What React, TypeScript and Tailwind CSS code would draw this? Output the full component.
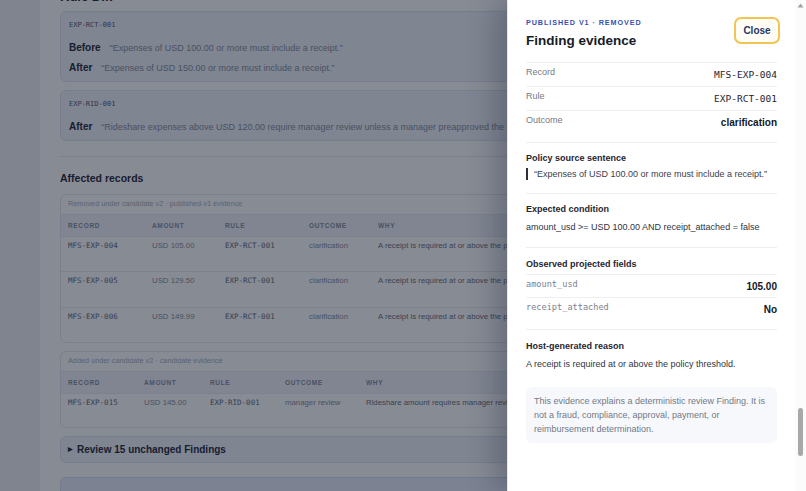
import React from "react";

const mono = "font-['DejaVu_Sans_Mono',monospace]";

function RuleCard({ id, rows }: { id: string; rows: { k: string; v: string }[] }) {
  return (
    <div className="rounded-[6px] border border-[#dde3ec] bg-[#eef2f8] px-[8px] pt-[8px] pb-[3px]">
      <div className={`${mono} text-[7px] leading-[10px] text-[#4b5873]`}>{id}</div>
      <div className="mt-[8px]">
        {rows.map((r) => (
          <div key={r.k} className="flex h-[20px] items-center gap-[9px] leading-[12px]">
            <span className="text-[10px] font-bold text-[#1e2433]">{r.k}</span>
            <span className="whitespace-nowrap text-[9px] text-[#858c99]">{r.v}</span>
          </div>
        ))}
      </div>
    </div>
  );
}

type Row = string[];

function DataTable({
  caption,
  cols,
  rows,
  lastH,
}: {
  caption: string;
  cols: string;
  rows: Row[];
  lastH?: string;
}) {
  const heads = ["RECORD", "AMOUNT", "RULE", "OUTCOME", "WHY"];
  return (
    <div className="overflow-hidden rounded-[6px] border border-[#e2e7ee] bg-white">
      <div className="flex h-[19px] items-center px-[7px] text-[7.3px] text-[#a9adb8]">{caption}</div>
      <div className={`grid h-[22px] items-center border-t border-[#e4e8ef] bg-[#f0f3f8] px-[7px] ${cols}`}>
        {heads.map((h) => (
          <div key={h} className="text-[6.5px] font-bold tracking-[0.1em] text-[#868c9b]">
            {h}
          </div>
        ))}
      </div>
      {rows.map((r, i) => (
        <div
          key={i}
          className={`grid ${i === rows.length - 1 && lastH ? lastH : "h-[35.3px]"} items-start border-t border-[#e8ebf0] px-[7px] pt-[4px] text-[7.8px] leading-[10px] ${cols}`}
        >
          <div className={`${mono} text-[7.5px] text-[#5e6474]`}>{r[0]}</div>
          <div className="text-[#868a94]">{r[1]}</div>
          <div className={`${mono} text-[7.5px] text-[#5e6474]`}>{r[2]}</div>
          <div className="text-[#868a94]">{r[3]}</div>
          <div className="whitespace-nowrap text-[#666b78]">{r[4]}</div>
        </div>
      ))}
    </div>
  );
}

function Background() {
  return (
    <div className="ml-[40px] min-h-[540px] w-[715px] bg-white px-[20px]">
      <div className="-mt-[12px] text-[13px] font-bold leading-[18px] text-[#1f2433]">Rule Diff</div>
      <div className="mt-[5px] flex flex-col gap-[8px]">
        <RuleCard
          id="EXP-RCT-001"
          rows={[
            { k: "Before", v: "\u201cExpenses of USD 100.00 or more must include a receipt.\u201d" },
            { k: "After", v: "\u201cExpenses of USD 150.00 or more must include a receipt.\u201d" },
          ]}
        />
        <RuleCard
          id="EXP-RID-001"
          rows={[
            {
              k: "After",
              v: "\u201cRideshare expenses above USD 120.00 require manager review unless a manager preapproved the expense.\u201d",
            },
          ]}
        />
      </div>
      <div className="mt-[15px] border-t border-[#e6e9ee] pt-[14px]">
        <div className="text-[10.5px] font-bold leading-[14px] text-[#1f2433]">Affected records</div>
        <div className="mt-[9px] flex flex-col gap-[8px]">
          <DataTable
            caption="Removed under candidate v2 · published-v1 evidence"
            cols="grid-cols-[84px_73px_84px_69px_1fr]"
            rows={[
              ["MFS-EXP-004", "USD 105.00", "EXP-RCT-001", "clarification", "A receipt is required at or above the policy threshold."],
              ["MFS-EXP-005", "USD 129.50", "EXP-RCT-001", "clarification", "A receipt is required at or above the policy threshold."],
              ["MFS-EXP-006", "USD 149.99", "EXP-RCT-001", "clarification", "A receipt is required at or above the policy threshold."],
            ]}
          />
          <DataTable
            caption="Added under candidate v2 · candidate evidence"
            cols="grid-cols-[76px_66px_75px_81px_1fr]"
            lastH="h-[34px]"
            rows={[["MFS-EXP-015", "USD 145.00", "EXP-RID-001", "manager review", "Rideshare amount requires manager review above the threshold."]]}
          />
          <div className="flex h-[27px] items-center gap-[4px] rounded-[6px] border border-[#dde3ec] bg-[#eef2f8] px-[7px] text-[10px] font-bold text-[#1e2433]">
            <span className="text-[6px]">▶</span>
            <span>Review 15 unchanged Findings</span>
          </div>
          <div className="mt-[6px] h-[40px] rounded-[6px] border border-[#d5dcf0] bg-[#e8ecfb]" />
        </div>
      </div>
    </div>
  );
}

function KV({
  k,
  v,
  bold,
  monoKey,
  h = "h-[24px]",
}: {
  k: string;
  v: string;
  bold?: boolean;
  monoKey?: boolean;
  h?: string;
}) {
  return (
    <div className={`flex ${h} items-start justify-between border-t border-[#eef0f3] pt-[3px]`}>
      <span
        className={
          monoKey
            ? `${mono} text-[8.6px] leading-[12px] text-[#7b8190]`
            : "text-[9px] leading-[12px] text-[#737987]"
        }
      >
        {k}
      </span>
      <span
        className={
          bold
            ? "pt-[3px] text-[10px] font-bold leading-[12px] text-[#111827]"
            : `${mono} pt-[3px] text-[9.5px] leading-[12px] text-[#1f2430]`
        }
      >
        {v}
      </span>
    </div>
  );
}

function Panel() {
  return (
    <aside className="absolute right-0 top-0 h-full w-[288px] border-l border-[#e5e7eb] bg-white px-[18px] shadow-[-10px_0_28px_rgba(15,23,42,0.28)]">
      <div className="flex items-start justify-between pt-[18px]">
        <div>
          <div className="text-[7.2px] font-bold leading-[10px] tracking-[0.13em] text-[#3451b2]">
            PUBLISHED V1 · REMOVED
          </div>
          <div className="mt-[3px] text-[13.5px] font-bold leading-[20px] text-[#161b26]">Finding evidence</div>
        </div>
        <button className="-mr-[3px] -mt-[1px] h-[27px] w-[46px] rounded-[7px] border-2 border-[#f1c453] bg-[#fffdf6] text-[10px] font-bold text-[#1e3766]">
          Close
        </button>
      </div>
      <div className="mt-[11px]">
        <KV k="Record" v="MFS-EXP-004" />
        <KV k="Rule" v="EXP-RCT-001" />
        <KV k="Outcome" v="clarification" bold />
      </div>
      <div className="mt-[8px] border-t border-[#eceef2] pt-[9px] pb-[12px]">
        <div className="text-[9px] font-bold leading-[12px] text-[#1f2430]">Policy source sentence</div>
        <div className="mt-[3px] flex items-center gap-[6px]">
          <span className="h-[12px] w-[2px] shrink-0 bg-[#2b303b]" />
          <span className="whitespace-nowrap text-[9px] leading-[14px] text-[#3b404b]">
            “Expenses of USD 100.00 or more must include a receipt.”
          </span>
        </div>
      </div>
      <div className="border-t border-[#eceef2] pt-[9px] pb-[14px]">
        <div className="text-[9px] font-bold leading-[12px] text-[#1f2430]">Expected condition</div>
        <div className="mt-[6px] text-[9px] leading-[12px] text-[#2f343f]">
          amount_usd &gt;= USD 100.00 AND receipt_attached = false
        </div>
      </div>
      <div className="border-t border-[#eceef2] pt-[10px] pb-[9px]">
        <div className="text-[9px] font-bold leading-[12px] text-[#1f2430]">Observed projected fields</div>
        <div className="mt-[4px]">
          <KV k="amount_usd" v="105.00" bold monoKey h="h-[23px]" />
          <KV k="receipt_attached" v="No" bold monoKey h="h-[23px]" />
        </div>
      </div>
      <div className="border-t border-[#eceef2] pt-[10px]">
        <div className="text-[9px] font-bold leading-[12px] text-[#1f2430]">Host-generated reason</div>
        <div className="mt-[6px] text-[9px] leading-[12px] text-[#2f343f]">
          A receipt is required at or above the policy threshold.
        </div>
        <div className="mt-[17px] rounded-[6px] bg-[#f6f8fb] px-[8px] py-[7px] text-[9px] leading-[14px] text-[#737987]">
          This evidence explains a deterministic review Finding. It is not a fraud, compliance, approval, payment, or
          reimbursement determination.
        </div>
      </div>
    </aside>
  );
}

export default function App() {
  return (
    <div className="flex h-[491px] w-[806px] overflow-hidden font-['Liberation_Sans',Arial,sans-serif]">
      <div className="relative h-full flex-1 overflow-hidden bg-[#eef1f5]">
        <Background />
        <div className="absolute inset-0 bg-[rgba(15,23,42,0.5)]" />
        <Panel />
      </div>
      <div className="flex h-full w-[11px] flex-col items-center bg-[#fbfbfb]">
        <svg width="7" height="5" viewBox="0 0 7 5" className="mt-[3px]">
          <path d="M3.5 0.5 L6.5 4.5 L0.5 4.5 Z" fill="#a3a3a3" />
        </svg>
        <div className="mt-[400px] h-[48px] w-[5px] rounded-full bg-[#a8a8a8]" />
      </div>
    </div>
  );
}
